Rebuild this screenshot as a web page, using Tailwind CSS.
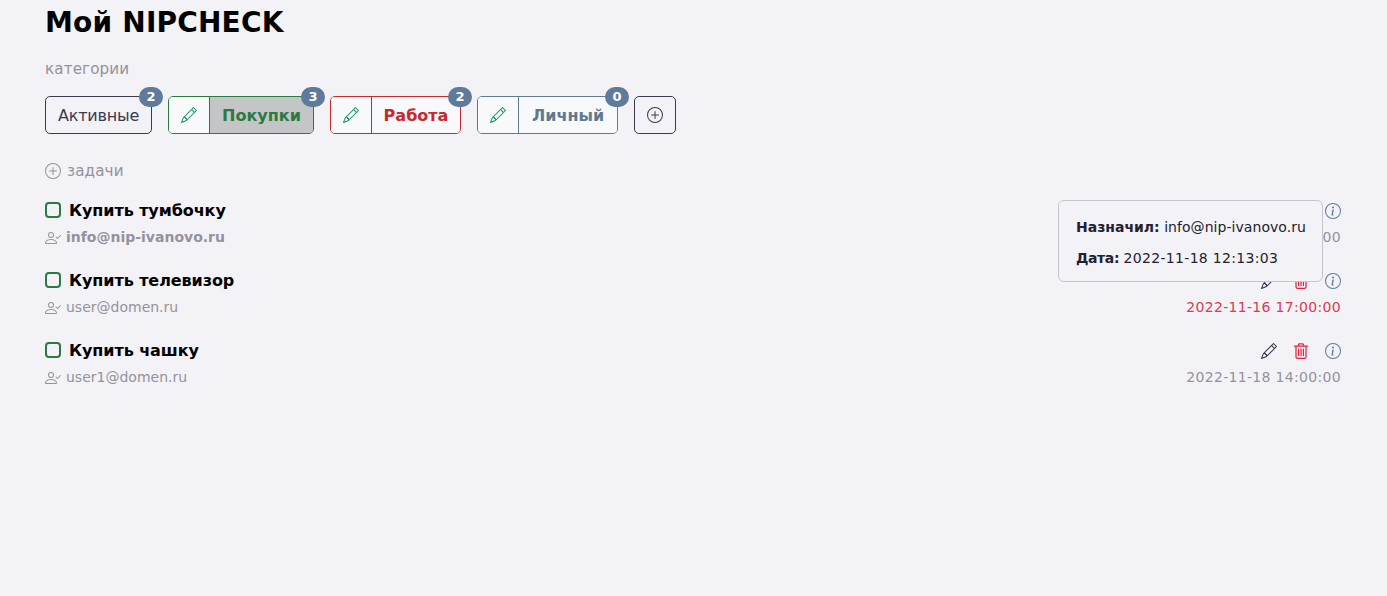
<!doctype html>
<html lang="ru"><head><meta charset="utf-8"><script src="https://cdn.jsdelivr.net/npm/@tailwindcss/browser@4"></script></head>
<body class="bg-[#f3f2f7] font-['DejaVu_Sans',sans-serif] h-[596px] overflow-hidden">
<svg class="hidden"><defs>
<symbol id="pencil" viewBox="0 0 16 16"><path fill="currentColor" d="M12.146.146a.5.5 0 0 1 .708 0l3 3a.5.5 0 0 1 0 .708l-10 10a.5.5 0 0 1-.168.11l-5 2a.5.5 0 0 1-.65-.65l2-5a.5.5 0 0 1 .11-.168l10-10zM11.207 2.5 13.5 4.793 14.793 3.5 12.5 1.207 11.207 2.5zm1.586 3L10.5 3.207 4 9.707V10h.5a.5.5 0 0 1 .5.5v.5h.5a.5.5 0 0 1 .5.5v.5h.293l6.5-6.5zm-9.761 5.175-.106.106-1.528 3.821 3.821-1.528.106-.106A.5.5 0 0 1 5 12.5V12h-.5a.5.5 0 0 1-.5-.5V11h-.5a.5.5 0 0 1-.468-.325z"/></symbol>
<symbol id="trash" viewBox="0 0 16 16"><path fill="none" stroke="currentColor" stroke-width="1.25" stroke-linecap="round" d="M1.5 3h13M5.5 3V1.5a.6.6 0 0 1 .6-.6h3.8a.6.6 0 0 1 .6.6V3M3 3v10.8a1.6 1.6 0 0 0 1.6 1.6h6.8a1.6 1.6 0 0 0 1.6-1.6V3M5.6 6v6.5M8 6v6.5M10.4 6v6.5"/></symbol>
<symbol id="info" viewBox="0 0 16 16"><path fill="currentColor" d="M8 15A7 7 0 1 1 8 1a7 7 0 0 1 0 14zm0 1A8 8 0 1 0 8 0a8 8 0 0 0 0 16z"/><path fill="currentColor" d="m8.93 6.588-2.29.287-.082.38.45.083c.294.07.352.176.288.469l-.738 3.468c-.194.897.105 1.319.808 1.319.545 0 1.178-.252 1.465-.598l.088-.416c-.2.176-.492.246-.686.246-.275 0-.375-.193-.304-.533L8.93 6.588zM9 4.5a1 1 0 1 1-2 0 1 1 0 0 1 2 0z"/></symbol>
<symbol id="plus" viewBox="0 0 16 16"><path fill="currentColor" d="M8 15A7 7 0 1 1 8 1a7 7 0 0 1 0 14zm0 1A8 8 0 1 0 8 0a8 8 0 0 0 0 16z"/><path fill="currentColor" d="M8 4a.5.5 0 0 1 .5.5v3h3a.5.5 0 0 1 0 1h-3v3a.5.5 0 0 1-1 0v-3h-3a.5.5 0 0 1 0-1h3v-3A.5.5 0 0 1 8 4z"/></symbol>
<symbol id="person" viewBox="0 0 16 16"><path fill="currentColor" d="M6 8a3 3 0 1 0 0-6 3 3 0 0 0 0 6zm2-3a2 2 0 1 1-4 0 2 2 0 0 1 4 0zm4 8c0 1-1 1-1 1H1s-1 0-1-1 1-4 6-4 6 3 6 4zm-1-.004c-.001-.246-.154-.986-.832-1.664C9.516 10.68 8.289 10 6 10c-2.29 0-3.516.68-4.168 1.332-.678.678-.83 1.418-.832 1.664h10z"/><path fill="currentColor" d="M15.854 5.146a.5.5 0 0 1 0 .708l-3 3a.5.5 0 0 1-.708 0l-1.5-1.5a.5.5 0 0 1 .708-.708L12.5 7.793l2.646-2.647a.5.5 0 0 1 .708 0z"/></symbol>
</defs></svg>
<main class="relative pl-[45px] pr-[46px]">
  <h1 class="text-[28px] leading-[34px] font-bold text-black pt-[6px] tracking-[0.2px]">Мой NIPCHECK</h1>
  <p class="mt-[19px] text-[15.2px] leading-[20px] text-[#94929c] tracking-[0.1px]">категории</p>
  <div class="mt-[17px] flex gap-4 text-[16px]">
    <div class="relative h-[38px] w-[107px] flex items-center justify-center pt-px rounded-[5px] border border-[#3a3a50] text-[#3a3a50] tracking-[-0.2px]">Активные
      <span class="absolute -top-[10px] -right-[12px] w-6 h-5 rounded-full bg-[#5f7a9b] text-white text-[13px] font-bold tracking-normal flex items-center justify-center">2</span></div>
    <div class="relative h-[38px] w-[146px] flex rounded-[5px] border border-[#2a7a42]">
      <span class="w-10 bg-[#f8f9fb] rounded-l-[4px] flex items-center justify-center text-[#1f9461]"><svg class="w-4 h-4"><use href="#pencil"/></svg></span>
      <span class="flex-1 border-l border-[#2a7a42] bg-[#c4c5c7] rounded-r-[4px] text-[#2a7a42] font-bold flex items-center justify-center pt-px">Покупки</span>
      <span class="absolute -top-[10px] -right-[12px] w-6 h-5 rounded-full bg-[#5f7a9b] text-white text-[13px] font-bold flex items-center justify-center">3</span></div>
    <div class="relative h-[38px] w-[131px] flex rounded-[5px] border border-[#c9282d]">
      <span class="w-10 bg-[#f8f9fb] rounded-l-[4px] flex items-center justify-center text-[#1f9461]"><svg class="w-4 h-4"><use href="#pencil"/></svg></span>
      <span class="flex-1 border-l border-[#c9282d] bg-[#f8f9fb] rounded-r-[4px] text-[#c9282d] font-bold flex items-center justify-center pt-px">Работа</span>
      <span class="absolute -top-[10px] -right-[12px] w-6 h-5 rounded-full bg-[#5f7a9b] text-white text-[13px] font-bold flex items-center justify-center">2</span></div>
    <div class="relative h-[38px] w-[141px] flex rounded-[5px] border border-[#5f7a90]">
      <span class="w-10 bg-[#f8f9fb] rounded-l-[4px] flex items-center justify-center text-[#1f9461]"><svg class="w-4 h-4"><use href="#pencil"/></svg></span>
      <span class="flex-1 border-l border-[#5f7a90] bg-[#f8f9fb] rounded-r-[4px] text-[#5f7a90] font-bold flex items-center justify-center pt-px">Личный</span>
      <span class="absolute -top-[10px] -right-[12px] w-6 h-5 rounded-full bg-[#5f7a9b] text-white text-[13px] font-bold flex items-center justify-center">0</span></div>
    <div class="h-[38px] w-[42px] rounded-[5px] border border-[#3a3a50] text-[#3a3a50] flex items-center justify-center"><svg class="w-4 h-4"><use href="#plus"/></svg></div>
  </div>
  <div class="mt-[27px] flex items-center gap-[6px] text-[15.2px] leading-[20px] text-[#94929c] tracking-[0.1px]"><svg class="w-4 h-4"><use href="#plus"/></svg>задачи</div>

  <ul class="mt-[20px]">
    <li class="h-[70px]">
      <div class="flex items-center h-5"><span class="w-4 h-4 mb-[2px] rounded-[4px] border-2 border-[#2a7a42]"></span><b class="ml-2 text-[16px] tracking-[-0.08px] text-black flex-1">Купить тумбочку</b>
        <span class="flex items-center gap-[16px]"><svg class="w-4 h-4 text-[#33334a]"><use href="#pencil"/></svg><svg class="w-4 h-4 text-[#e0243f]"><use href="#trash"/></svg><svg class="w-4 h-4 text-[#5f7a9b]"><use href="#info"/></svg></span></div>
      <div class="flex items-center mt-[6px] h-5 text-[14px] text-[#94929c]"><svg class="w-4 h-4 mr-[5px] mt-px"><use href="#person"/></svg><b>info@nip-ivanovo.ru</b><span class="ml-auto tracking-[0.32px]">2022-11-18 12:00:00</span></div>
    </li>
    <li class="h-[70px]">
      <div class="flex items-center h-5"><span class="w-4 h-4 mb-[2px] rounded-[4px] border-2 border-[#2a7a42]"></span><b class="ml-2 text-[16px] tracking-[-0.08px] text-black flex-1">Купить телевизор</b>
        <span class="flex items-center gap-[16px]"><svg class="w-4 h-4 text-[#33334a]"><use href="#pencil"/></svg><svg class="w-4 h-4 text-[#e0243f]"><use href="#trash"/></svg><svg class="w-4 h-4 text-[#5f7a9b]"><use href="#info"/></svg></span></div>
      <div class="flex items-center mt-[6px] h-5 text-[14px] text-[#94929c]"><svg class="w-4 h-4 mr-[5px] mt-px"><use href="#person"/></svg><span>user@domen.ru</span><span class="ml-auto text-[#dc3a50] tracking-[0.32px]">2022-11-16 17:00:00</span></div>
    </li>
    <li class="h-[70px]">
      <div class="flex items-center h-5"><span class="w-4 h-4 mb-[2px] rounded-[4px] border-2 border-[#2a7a42]"></span><b class="ml-2 text-[16px] tracking-[-0.08px] text-black flex-1">Купить чашку</b>
        <span class="flex items-center gap-[16px]"><svg class="w-4 h-4 text-[#33334a]"><use href="#pencil"/></svg><svg class="w-4 h-4 text-[#e0243f]"><use href="#trash"/></svg><svg class="w-4 h-4 text-[#5f7a9b]"><use href="#info"/></svg></span></div>
      <div class="flex items-center mt-[6px] h-5 text-[14px] text-[#94929c]"><svg class="w-4 h-4 mr-[5px] mt-px"><use href="#person"/></svg><span>user1@domen.ru</span><span class="ml-auto tracking-[0.32px]">2022-11-18 14:00:00</span></div>
    </li>
  </ul>

  <div class="absolute left-[1058px] top-[200px] w-[265px] h-[82px] rounded-[6px] border border-[#c6c6cf] bg-[#f3f2f7] pl-[17px] pt-[16px] text-[14px] leading-[20px] text-[#22222e]">
    <p><b>Назначил:</b> <span class="tracking-[0.05px]">info@nip-ivanovo.ru</span></p>
    <p class="mt-[11px]"><b class="tracking-[-0.4px]">Дата:</b> <span class="tracking-[0.32px]">2022-11-18 12:13:03</span></p>
  </div>
</main>
</body></html>
